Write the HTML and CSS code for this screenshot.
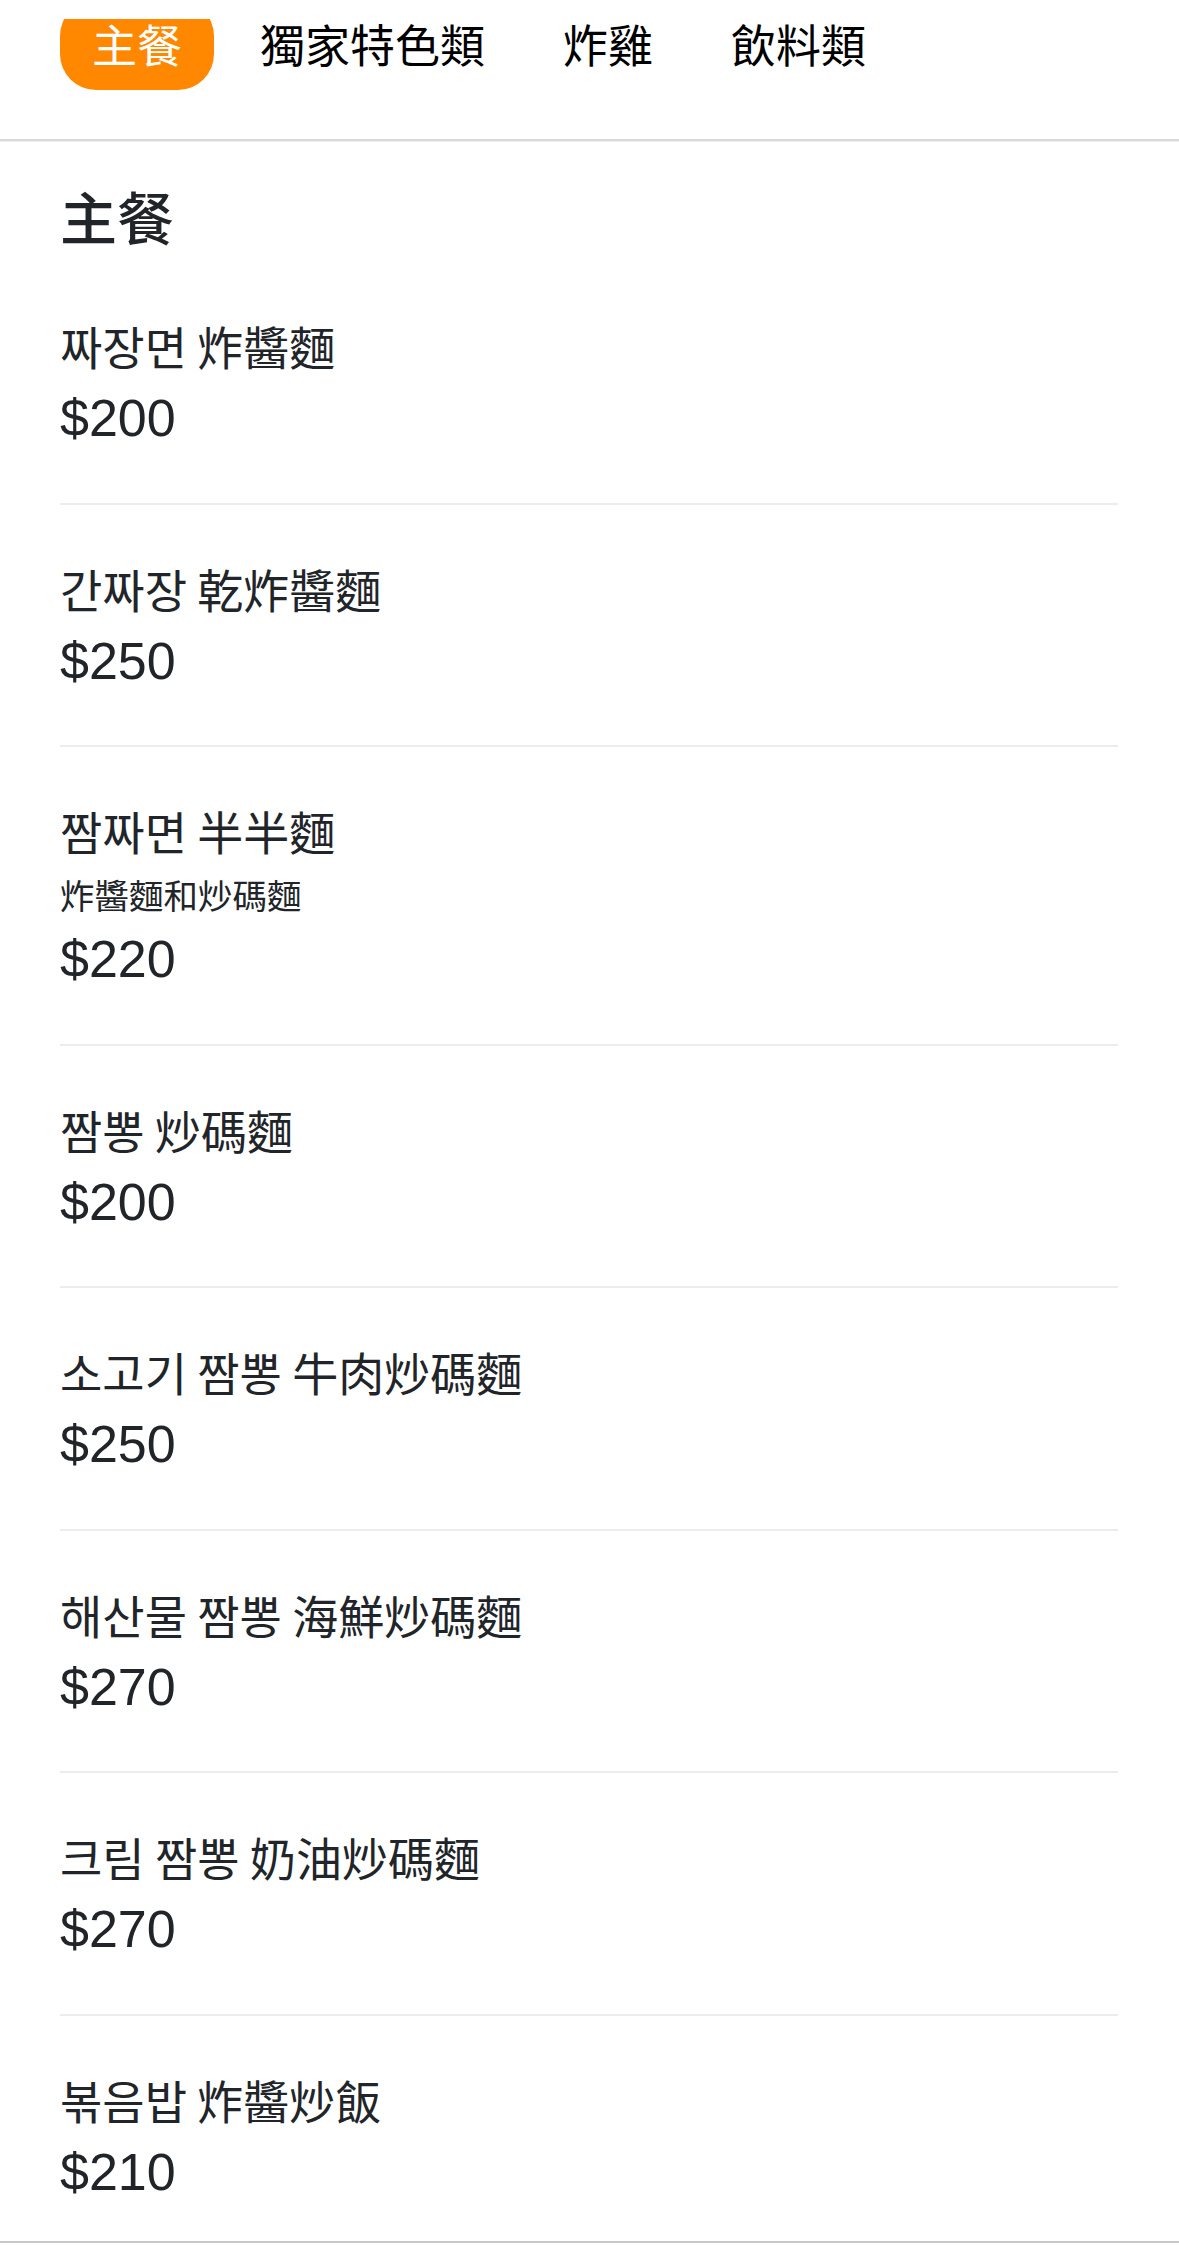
FILE: index.html
```html
<!DOCTYPE html>
<html lang="zh-Hant">
<head>
<meta charset="utf-8">
<title>Menu</title>
<link rel="stylesheet" href="styles.css">
</head>
<body>
<nav class="tabs">
  <a class="tab active">主餐</a>
  <a class="tab">獨家特色類</a>
  <a class="tab">炸雞</a>
  <a class="tab">飲料類</a>
</nav>
<main class="menu">
  <h2 class="section-title">主餐</h2>
  <ul class="items">
    <li class="item"><div class="name">짜장면 炸醬麵</div><div class="price">$200</div></li>
    <li class="item"><div class="name">간짜장 乾炸醬麵</div><div class="price">$250</div></li>
    <li class="item"><div class="name">짬짜면 半半麵</div><div class="desc">炸醬麵和炒碼麵</div><div class="price">$220</div></li>
    <li class="item"><div class="name">짬뽕 炒碼麵</div><div class="price">$200</div></li>
    <li class="item"><div class="name">소고기 짬뽕 牛肉炒碼麵</div><div class="price">$250</div></li>
    <li class="item"><div class="name">해산물 짬뽕 海鮮炒碼麵</div><div class="price">$270</div></li>
    <li class="item"><div class="name">크림 짬뽕 奶油炒碼麵</div><div class="price">$270</div></li>
    <li class="item last"><div class="name">볶음밥 炸醬炒飯</div><div class="price">$210</div></li>
  </ul>
</main>
<footer class="bottom-bar"></footer>
</body>
</html>
```

FILE: styles.css
```css
html, body {
  margin: 0;
  padding: 0;
  background: #ffffff;
}

body {
  font-family: "Noto Sans CJK TC", "Noto Sans CJK KR", sans-serif;
  color: #212529;
}

.tabs {
  display: flex;
  align-items: flex-start;
  gap: 14px;
  height: 139px;
  padding: 0 0 0 60px;
  border-bottom: 2px solid #d9d9d9;
  box-shadow: 0 1px 0 #efefef;
  box-sizing: content-box;
}

.tab {
  display: block;
  padding: 0 32px;
  height: 90px;
  line-height: 88px;
  font-size: 45px;
  color: #000000;
  text-decoration: none;
  white-space: nowrap;
}

.tab.active {
  background: #ff8800;
  color: #ffffff;
  border-radius: 36px;
  clip-path: inset(19px 0 0 0);
}

.menu {
  padding: 0 61px 0 60px;
}

.section-title {
  margin: 40px 0 13px;
  font-size: 57px;
  line-height: 68px;
  font-weight: 500;
  color: #212529;
}

.items {
  list-style: none;
  margin: 0;
  padding: 0;
}

.item {
  padding: 47px 0 46.5px;
  border-bottom: 2px solid #ececec;
}

.item.last {
  padding-bottom: 31.5px;
  border-bottom: none;
}

.name {
  font-size: 46px;
  line-height: 72px;
}

.desc {
  font-size: 34.5px;
  line-height: 56px;
}

.price {
  font-family: "Liberation Sans", "Noto Sans CJK TC", sans-serif;
  font-size: 52px;
  line-height: 75px;
}

.bottom-bar {
  height: 4px;
  border-top: 2px solid #c8c8c8;
  background: #ffffff;
}
```
